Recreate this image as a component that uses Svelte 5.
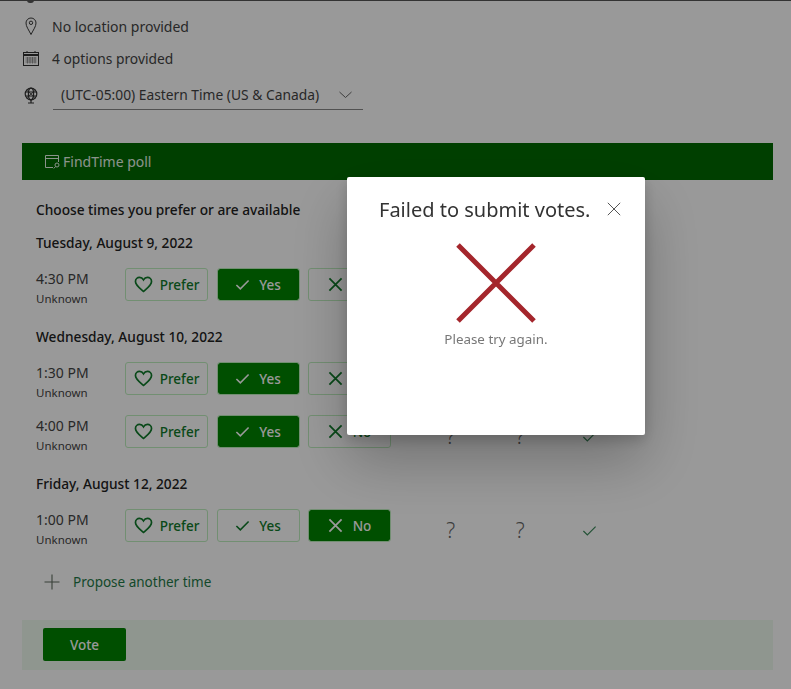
<script lang="ts">
	type Vote = 'yes' | 'no' | 'maybe';
	interface Slot {
		time: string;
		vote: 'yes' | 'no';
		others: Vote[];
	}
	interface Day {
		label: string;
		slots: Slot[];
	}

	const days: Day[] = [
		{
			label: 'Tuesday, August 9, 2022',
			slots: [{ time: '4:30 PM', vote: 'yes', others: ['maybe', 'maybe', 'yes'] }]
		},
		{
			label: 'Wednesday, August 10, 2022',
			slots: [
				{ time: '1:30 PM', vote: 'yes', others: ['maybe', 'maybe', 'yes'] },
				{ time: '4:00 PM', vote: 'yes', others: ['maybe', 'maybe', 'yes'] }
			]
		},
		{
			label: 'Friday, August 12, 2022',
			slots: [{ time: '1:00 PM', vote: 'no', others: ['maybe', 'maybe', 'yes'] }]
		}
	];

	let dialogOpen = $state(true);
</script>

{#snippet check(size: number)}
	<svg width={size} height={size} viewBox="0 0 16 16" fill="none" stroke="currentColor" stroke-width="1.7">
		<path d="M1.500 8.500l4.200 4.200L14.500 3.800" />
	</svg>
{/snippet}

{#snippet cross(size: number)}
	<svg width={size} height={size} viewBox="0 0 16 16" fill="none" stroke="currentColor" stroke-width="1.9">
		<path d="M1.500 1.500l13 13M14.500 1.500l-13 13" />
	</svg>
{/snippet}

<div class="page">
	<div class="top-edge"><span class="top-nub"></span></div>

	<div class="info-row location">
		<svg class="info-icon" width="18" height="20" viewBox="0 0 18 20" fill="none" stroke="#3a3a3a" stroke-width="1">
			<path d="M9 17.500C6.500 12.500 4 9.500 4 6a5 5 0 0 1 10 0c0 3.500-2.500 6.500-5 11.500z" />
			<circle cx="9" cy="5.800" r="1.700" />
		</svg>
		<span>No location provided</span>
	</div>
	<div class="info-row options">
		<svg class="info-icon" width="18" height="18" viewBox="0 0 18 18" fill="none" stroke="#333" stroke-width="1">
			<rect x="1.500" y="2.500" width="15" height="13" />
			<path d="M1.500 5h15" stroke-width="2" />
			<path d="M5 1v2M13 1v2" />
			<path d="M3.500 8h11M3.500 10h11M3.500 12h11M5.500 7v6.500M8 7v6.500M10.500 7v6.500M13 7v6.500" stroke="#777" stroke-width=".7" />
		</svg>
		<span>4 options provided</span>
	</div>
	<div class="info-row zone">
		<svg class="info-icon" width="18" height="18" viewBox="0 0 18 18" fill="none" stroke="#333" stroke-width="1.200">
			<circle cx="9" cy="8" r="5.800" />
			<ellipse cx="9" cy="8" rx="2.600" ry="5.800" />
			<path d="M3.500 6h11M3.500 10h11M9 14v3M6 17h6" />
			<path d="M4.500 4l9 8M13.500 4l-9 8" stroke-width=".8" />
		</svg>
		<div class="zone-select">
			<span>(UTC-05:00) Eastern Time (US &amp; Canada)</span>
			<svg width="13" height="8" viewBox="0 0 13 8" fill="none" stroke="#666" stroke-width="1">
				<path d="M.5 1l6 5.500L12.500 1" />
			</svg>
		</div>
	</div>

	<div class="banner">
		<svg width="17" height="16" viewBox="0 0 17 16" fill="none" stroke="currentColor" stroke-width="1">
			<path d="M9 13.500H1.500v-12h13V8" />
			<path d="M1.500 4.500h13" />
			<circle cx="13" cy="11" r="2" />
			<path d="M11.500 12.500L9.800 14.500" />
		</svg>
		<span>FindTime poll</span>
	</div>

	<div class="poll">
		<h2 class="prompt">Choose times you prefer or are available</h2>
		{#each days as day (day.label)}
			<section class="day">
				<h3 class="day-label">{day.label}</h3>
				{#each day.slots as slot (slot.time)}
					<div class="slot">
						<div class="slot-time">
							<div class="time">{slot.time}</div>
							<div class="unknown">Unknown</div>
						</div>
						<div class="vote-btns">
							<button class="vote-btn prefer">
								<svg width="19" height="17" viewBox="0 0 20 18" fill="none" stroke="currentColor" stroke-width="1.800">
									<path d="M10 16.300C6 12.800 1.500 9.800 1.500 5.800 1.500 3.300 3.500 1.500 5.800 1.500c1.800 0 3.300 1 4.200 2.600.9-1.600 2.400-2.600 4.200-2.600 2.300 0 4.300 1.800 4.300 4.300 0 4-4.500 7-8.500 10.500z" />
								</svg>
								Prefer
							</button>
							<button class="vote-btn yes" class:active={slot.vote === 'yes'}>
								{@render check(15)}
								Yes
							</button>
							<button class="vote-btn no" class:active={slot.vote === 'no'}>
								{@render cross(15)}
								No
							</button>
						</div>
						<div class="others">
							{#each slot.others as other, i (i)}
								<div class="other">
									{#if other === 'maybe'}
										<span class="maybe">?</span>
									{:else}
										<span class="tick">{@render check(15)}</span>
									{/if}
								</div>
							{/each}
						</div>
					</div>
				{/each}
			</section>
		{/each}

		<div class="propose">
			<svg width="16" height="16" viewBox="0 0 16 16" fill="none" stroke="#5f6b5f" stroke-width="1.100">
				<path d="M8 .5v15M.5 8h15" />
			</svg>
			<span>Propose another time</span>
		</div>
	</div>

	<div class="vote-bar">
		<button class="submit">Vote</button>
	</div>
</div>

{#if dialogOpen}
	<div class="overlay">
		<div class="dialog" role="dialog">
			<header class="dialog-head">
				<h1>Failed to submit votes.</h1>
				<button class="close" aria-label="Close" onclick={() => (dialogOpen = false)}>
					<svg width="14" height="14" viewBox="0 0 14 14" fill="none" stroke="#555" stroke-width="1">
						<path d="M.8.8l12.400 12.400M13.200.8L.8 13.200" />
					</svg>
				</button>
			</header>
			<svg class="fail-mark" width="80" height="80" viewBox="0 0 80 80" fill="none" stroke="#a4262c" stroke-width="5">
				<path d="M2 2l76 76M78 2L2 78" />
			</svg>
			<p class="dialog-msg">Please try again.</p>
		</div>
	</div>
{/if}

<style>
	:global(body) {
		margin: 0;
		background: #fff;
	}

	.page {
		width: 791px;
		height: 689px;
		overflow: hidden;
		box-sizing: border-box;
		font-family: 'Noto Sans', 'Open Sans', sans-serif;
		font-size: 14px;
		color: #3a3a3a;
	}

	.top-edge {
		height: 1px;
		background: #555;
		position: relative;
	}

	.top-nub {
		position: absolute;
		left: 27px;
		top: 0;
		width: 7px;
		height: 3px;
		border-radius: 0 0 4px 4px;
		background: #555;
	}

	.info-row {
		display: flex;
		align-items: center;
		height: 24px;
		padding-left: 22px;
		color: #444;
	}

	.info-row span {
		line-height: 24px;
	}

	.location {
		margin-top: 14px;
	}

	.options {
		margin-top: 8px;
		font-size: 13.800px;
	}

	.zone {
		margin-top: 9px;
		height: 30px;
	}

	.info-icon {
		flex: none;
		margin-right: 12px;
	}

	.zone-select {
		width: 310px;
		height: 30px;
		margin-left: 1px;
		box-sizing: border-box;
		display: flex;
		align-items: center;
		gap: 20px;
		padding-left: 8px;
		border-bottom: 1px solid #888;
		font-size: 13.800px;
	}

	.banner {
		margin: 33px 18px 0 22px;
		height: 37px;
		display: flex;
		align-items: center;
		gap: 2px;
		padding-left: 22px;
		background: #006a00;
		color: #e8f4e8;
		font-size: 14px;
	}

	.poll {
		padding: 21px 0 0 36px;
	}

	.prompt {
		margin: 0;
		font-size: 13.700px;
		font-weight: 500;
		line-height: 18px;
		color: #222;
	}

	.day {
		margin-top: 15px;
	}

	.day + .day {
		margin-top: 27px;
	}

	.day-label {
		margin: 0 0 16px;
		font-size: 13.700px;
		font-weight: 500;
		line-height: 18px;
		color: #222;
	}

	.slot {
		display: flex;
		height: 33px;
		margin-bottom: 20px;
	}

	.slot:last-child {
		margin-bottom: 0;
	}

	.slot-time {
		width: 89px;
		flex: none;
		padding-top: 1px;
	}

	.time {
		font-size: 14px;
		line-height: 20px;
		color: #444;
	}

	.unknown {
		font-size: 11.500px;
		line-height: 20px;
		color: #444;
	}

	.vote-btns {
		display: flex;
		gap: 8.500px;
	}

	.vote-btn {
		width: 83px;
		height: 33px;
		box-sizing: border-box;
		display: flex;
		align-items: center;
		justify-content: center;
		gap: 7px;
		padding: 0;
		border: 1px solid #bfeebf;
		border-radius: 3px;
		background: transparent;
		background-clip: padding-box;
		color: #0f7a2a;
		font-family: inherit;
		font-size: 13.500px;
		font-weight: 500;
	}

	.vote-btn.yes {
		gap: 9px;
	}

	.vote-btn.no {
		gap: 10px;
	}

	.vote-btn.active {
		background-color: #008400;
		color: #fff;
	}

	.others {
		display: flex;
		margin-left: 25px;
		padding-top: 3px;
	}

	.other {
		width: 69.500px;
		display: flex;
		justify-content: center;
		align-items: center;
		height: 36px;
	}

	.maybe {
		font-size: 21px;
		font-weight: 300;
		color: #666;
	}

	.tick {
		display: flex;
		color: #3d8a5c;
	}

	.tick :global(svg) {
		stroke-width: 1.300;
	}

	.propose {
		display: flex;
		align-items: center;
		gap: 13px;
		margin: 30px 0 0 8px;
		height: 20px;
		color: #1f7a48;
		font-size: 13.500px;
	}

	.vote-bar {
		margin: 28px 18px 0 22px;
		height: 50px;
		box-sizing: border-box;
		padding: 8px 21px;
		background: #eefbee;
	}

	.submit {
		width: 83px;
		height: 33px;
		border: none;
		border-radius: 2px;
		background: #008400;
		color: #fff;
		font-family: inherit;
		font-size: 13.500px;
		font-weight: 500;
	}

	.overlay {
		position: fixed;
		inset: 0;
		background: rgba(0, 0, 0, 0.4);
		font-family: 'Noto Sans', 'Open Sans', sans-serif;
	}

	.dialog {
		position: absolute;
		left: 347px;
		top: 177px;
		width: 298px;
		height: 258px;
		box-sizing: border-box;
		display: flex;
		flex-direction: column;
		align-items: center;
		background: #fff;
		border-radius: 2px;
		box-shadow: 0 26px 58px rgba(0, 0, 0, 0.26), 0 5px 14px rgba(0, 0, 0, 0.18);
	}

	.dialog-head {
		width: 100%;
		box-sizing: border-box;
		display: flex;
		align-items: center;
		justify-content: space-between;
		padding: 18px 24px 0 32px;
		height: 46px;
	}

	.dialog-head h1 {
		margin: 0;
		font-size: 20px;
		font-weight: 400;
		white-space: nowrap;
		color: #333;
	}

	.close {
		display: flex;
		padding: 0;
		border: none;
		background: none;
	}

	.fail-mark {
		margin-top: 20px;
	}

	.dialog-msg {
		margin: 7px 0 0;
		font-size: 13.400px;
		line-height: 18px;
		color: #777;
	}
</style>
